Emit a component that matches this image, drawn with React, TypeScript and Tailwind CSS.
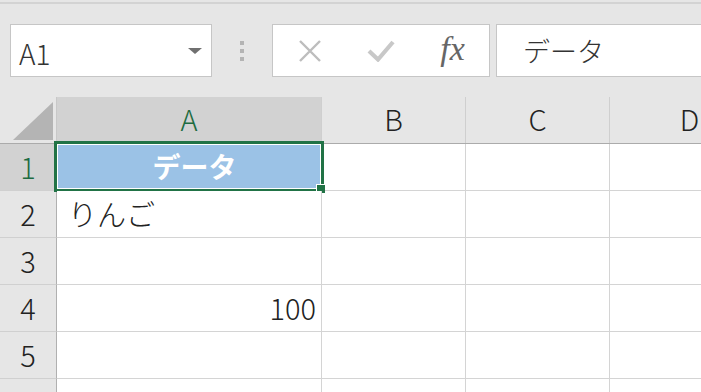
import React from 'react';

const jp = '[font-family:"Noto_Sans_CJK_JP","Noto_Sans",sans-serif]';

const cols = [
  { key: 'A', w: 'w-[265px]' },
  { key: 'B', w: 'w-[144px]' },
  { key: 'C', w: 'w-[144px]' },
  { key: 'D', w: 'w-[160px]' },
];

const rows: { n: number; a?: string; align?: 'left' | 'right' }[] = [
  { n: 1 },
  { n: 2, a: 'りんご', align: 'left' },
  { n: 3 },
  { n: 4, a: '100', align: 'right' },
  { n: 5 },
  { n: 6 },
];

const App: React.FC = () => {
  return (
    <div className={`w-[701px] h-[392px] overflow-hidden bg-[#e6e6e6] ${jp} font-light text-[#222]`}>
      {/* top edge */}
      <div className="h-[2px]" />
      <div className="h-[2px] bg-[#d3d3d3]" />

      {/* Formula bar */}
      <div className="flex items-center pl-[10px] mt-[20px] h-[53px]">
        <div className="w-[202px] h-[53px] bg-white border border-[#c6c6c6] flex items-center justify-between pl-[8px] pr-[9px] shrink-0">
          <span className="text-[28px] leading-none pt-[4px] text-[#333]">A1</span>
          <svg width="14" height="6" viewBox="0 0 14 6">
            <path d="M0 0 L14 0 L7 6 Z" fill="#707070" />
          </svg>
        </div>
        <div className="w-[60px] flex flex-col items-center gap-[4px] shrink-0">
          <div className="w-[4px] h-[4px] bg-[#b4b4b4]" />
          <div className="w-[4px] h-[4px] bg-[#b4b4b4]" />
          <div className="w-[4px] h-[4px] bg-[#b4b4b4]" />
        </div>
        <div className="w-[218px] h-[53px] bg-white border border-[#c6c6c6] flex items-center shrink-0">
          <div className="w-[73px] flex justify-center">
            <svg width="24" height="22" viewBox="0 0 24 22">
              <path d="M2 1 L22 21 M22 1 L2 21" stroke="#bdbdbd" strokeWidth="2.4" />
            </svg>
          </div>
          <div className="w-[70px] flex justify-center">
            <svg width="28" height="22" viewBox="0 0 28 22">
              <path d="M2 11 L11 19.5 L26 2" stroke="#c8c8c8" strokeWidth="4.2" fill="none" />
            </svg>
          </div>
          <div className="w-[73px] flex justify-center">
            <span className="[font-family:'Liberation_Serif',serif] italic font-normal text-[34px] leading-none text-[#666] -mt-[4px]">fx</span>
          </div>
        </div>
        <div className="w-[6px] shrink-0" />
        <div className="w-[240px] h-[53px] bg-white border border-[#c6c6c6] flex items-center pl-[26px] shrink-0">
          <span className="text-[27px] leading-none text-[#333]">データ</span>
        </div>
      </div>

      {/* Sheet */}
      <div className="mt-[20px]">
        {/* column headers */}
        <div className="flex h-[47px] border-b border-[#ababab]">
          <div className="w-[57px] shrink-0 border-r border-[#c8c8c8] flex items-end justify-end pr-[3px] pb-[3px]">
            <svg width="40" height="38" viewBox="0 0 40 38">
              <path d="M0 38 L40 0 L40 38 Z" fill="#b4b4b4" />
            </svg>
          </div>
          {cols.map(c => (
            <div
              key={c.key}
              className={`${c.w} shrink-0 border-r border-[#cfcfcf] flex items-center justify-center pb-[4px] text-[29px] leading-none ${c.key === 'A' ? 'bg-[#d2d2d2] text-[#1e6b41]' : 'text-[#222]'}`}
            >
              {c.key}
            </div>
          ))}
        </div>

        {rows.map(r => (
          <div key={r.n} className="flex h-[47px]">
            <div
              className={`w-[57px] shrink-0 border-r border-b border-r-[#b0b0b0] border-b-[#d0d0d0] flex items-center justify-center text-[29px] leading-none pb-[2px] ${r.n === 1 ? 'bg-[#d2d2d2] text-[#1e6b41]' : ''}`}
            >
              {r.n}
            </div>
            <div
              className={`w-[265px] shrink-0 border-r border-b border-[#d4d4d4] flex items-center relative text-[29px] leading-none ${r.n === 1 ? 'bg-[#9bc2e6]' : 'bg-white'} ${r.align === 'right' ? 'justify-end pr-[5px]' : 'pl-[11px]'}`}
            >
              {r.n === 1 && (
                <>
                  <span className="w-full text-center text-white font-bold text-[28px] pb-[2px]">データ</span>
                  <div className="absolute -left-[3px] -top-[3px] -right-[3px] -bottom-[2px] border-[3px] border-[#217346] shadow-[inset_0_0_0_1px_white]">
                    <div className="absolute -right-[4px] -bottom-[4px] w-[9px] h-[9px] bg-[#217346] border-l border-t border-white" />
                  </div>
                </>
              )}
              {r.a && <span className="pb-[2px]">{r.a}</span>}
            </div>
            <div className="w-[144px] shrink-0 border-r border-b border-[#d4d4d4] bg-white" />
            <div className="w-[144px] shrink-0 border-r border-b border-[#d4d4d4] bg-white" />
            <div className="w-[160px] shrink-0 border-r border-b border-[#d4d4d4] bg-white" />
          </div>
        ))}
      </div>
    </div>
  );
};

export default App;
